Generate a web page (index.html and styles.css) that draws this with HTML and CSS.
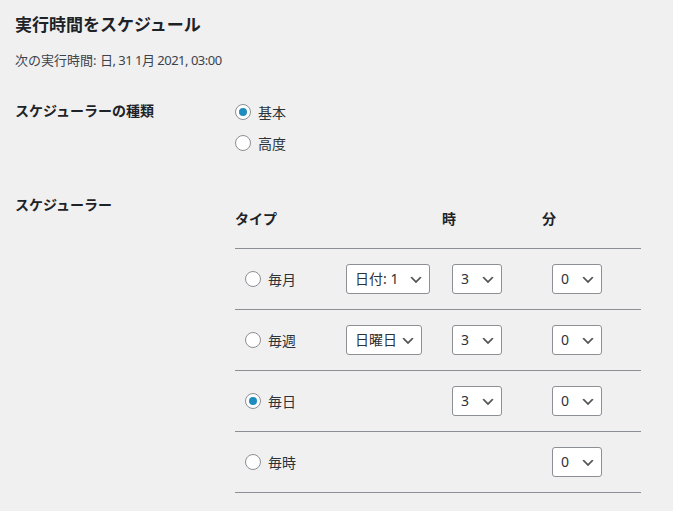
FILE: index.html
```html
<!DOCTYPE html>
<html lang="ja">
<head>
<meta charset="utf-8">
<title>実行時間をスケジュール</title>
<link rel="stylesheet" href="styles.css">
</head>
<body>
<div class="wrap">
  <h2 class="title">実行時間をスケジュール</h2>
  <p class="next">次の実行時間: <span class="next-date">日, 31 1月 2021, 03:00</span></p>

  <div class="form-row first">
    <div class="th">スケジューラーの種類</div>
    <div class="td options">
      <label class="opt"><input type="radio" name="kind" class="radio" checked>基本</label>
      <label class="opt"><input type="radio" name="kind" class="radio">高度</label>
    </div>
  </div>

  <div class="form-row second">
    <div class="th">スケジューラー</div>
    <div class="td sched-td">
      <div class="sched">
        <div class="sched-head">
          <div class="hcell">タイプ</div>
          <div class="hcell"></div>
          <div class="hcell">時</div>
          <div class="hcell">分</div>
        </div>

        <div class="sched-row">
          <div class="cell"><label class="tlabel"><input type="radio" name="type" class="radio">毎月</label></div>
          <div class="cell">
            <select class="sel sel-day"><option>日付: 1</option><option>日付: 31</option></select>
          </div>
          <div class="cell">
            <select class="sel sel-num"><option>3</option><option>23</option></select>
          </div>
          <div class="cell">
            <select class="sel sel-num"><option>0</option><option>59</option></select>
          </div>
        </div>

        <div class="sched-row">
          <div class="cell"><label class="tlabel"><input type="radio" name="type" class="radio">毎週</label></div>
          <div class="cell">
            <select class="sel sel-wd"><option>日曜日</option><option>月曜日</option></select>
          </div>
          <div class="cell">
            <select class="sel sel-num"><option>3</option><option>23</option></select>
          </div>
          <div class="cell">
            <select class="sel sel-num"><option>0</option><option>59</option></select>
          </div>
        </div>

        <div class="sched-row">
          <div class="cell"><label class="tlabel"><input type="radio" name="type" class="radio" checked>毎日</label></div>
          <div class="cell"></div>
          <div class="cell">
            <select class="sel sel-num"><option>3</option><option>23</option></select>
          </div>
          <div class="cell">
            <select class="sel sel-num"><option>0</option><option>59</option></select>
          </div>
        </div>

        <div class="sched-row">
          <div class="cell"><label class="tlabel"><input type="radio" name="type" class="radio">毎時</label></div>
          <div class="cell"></div>
          <div class="cell"></div>
          <div class="cell">
            <select class="sel sel-num"><option>0</option><option>59</option></select>
          </div>
        </div>
      </div>
    </div>
  </div>
</div>
</body>
</html>
```

FILE: styles.css
```css
html, body {
  margin: 0;
  padding: 0;
  background: #f0f0f1;
}

body {
  font-family: "Noto Sans", "Noto Sans CJK JP", sans-serif;
  color: #1d2327;
  font-size: 13px;
}

.wrap {
  padding: 0 15px;
}

.title {
  margin: 14px 0 0;
  font-size: 17px;
  line-height: 22px;
  font-weight: 700;
  color: #1d2327;
}

.next {
  margin: 15px 0 0;
  font-size: 13px;
  line-height: 19px;
  color: #3c434a;
}

.next-date {
  letter-spacing: -0.5px;
}

.form-row {
  display: flex;
  align-items: flex-start;
}

.form-row.first {
  margin-top: 16px;
}

.form-row.second {
  margin-top: 17px;
}

.th {
  width: 220px;
  flex: none;
  font-size: 14px;
  line-height: 20px;
  font-weight: 700;
  color: #1d2327;
}

.first .th {
  padding-top: 15px;
}

.second .th {
  padding-top: 20px;
}

.options {
  padding-top: 10px;
  display: flex;
  flex-direction: column;
}

.opt {
  display: flex;
  align-items: center;
  height: 31px;
  font-size: 14px;
  color: #2c3338;
}

.radio {
  -webkit-appearance: none;
  appearance: none;
  width: 16px;
  height: 16px;
  margin: 0 7px 0 0;
  border: 1px solid #8c8f94;
  border-radius: 50%;
  background: #fff;
  box-sizing: border-box;
  display: inline-flex;
  align-items: center;
  justify-content: center;
  flex: none;
}

.radio:checked::before {
  content: "";
  width: 8px;
  height: 8px;
  border-radius: 50%;
  background: #1e8cbe;
}

.sched-td {
  padding-top: 23px;
}

.sched {
  width: 406px;
}

.sched-head,
.sched-row {
  display: grid;
  grid-template-columns: 101px 106px 100px 99px;
}

.sched-head {
  padding: 10px 0 19px;
  border-bottom: 1px solid #8c8f94;
}

.hcell {
  font-size: 14px;
  line-height: 21px;
  font-weight: 700;
  color: #1d2327;
}

.sched-row {
  height: 60px;
  border-bottom: 1px solid #8c8f94;
  align-items: center;
}

.cell {
  padding-left: 10px;
  display: flex;
  align-items: center;
}

.tlabel {
  display: flex;
  align-items: center;
  font-size: 14px;
  color: #2c3338;
}

.sel {
  -webkit-appearance: none;
  appearance: none;
  box-sizing: border-box;
  height: 30px;
  margin: 0;
  padding: 0 24px 0 8px;
  font-family: "Noto Sans", "Noto Sans CJK JP", sans-serif;
  font-size: 14px;
  line-height: 28px;
  color: #2c3338;
  border: 1px solid #8c8f94;
  border-radius: 3px;
  background: #fff url("data:image/svg+xml;charset=US-ASCII,%3Csvg%20width%3D%2220%22%20height%3D%2220%22%20xmlns%3D%22http%3A%2F%2Fwww.w3.org%2F2000%2Fsvg%22%3E%3Cpath%20d%3D%22M5%206l5%205%205-5%202%201-7%207-7-7%202-1z%22%20fill%3D%22%23555%22%2F%3E%3C%2Fsvg%3E") no-repeat right 5px top 55%;
  background-size: 16px 16px;
}

.sel-day {
  width: 84px;
}

.sel-wd {
  width: 76px;
}

.sel-num {
  width: 50px;
}
```
